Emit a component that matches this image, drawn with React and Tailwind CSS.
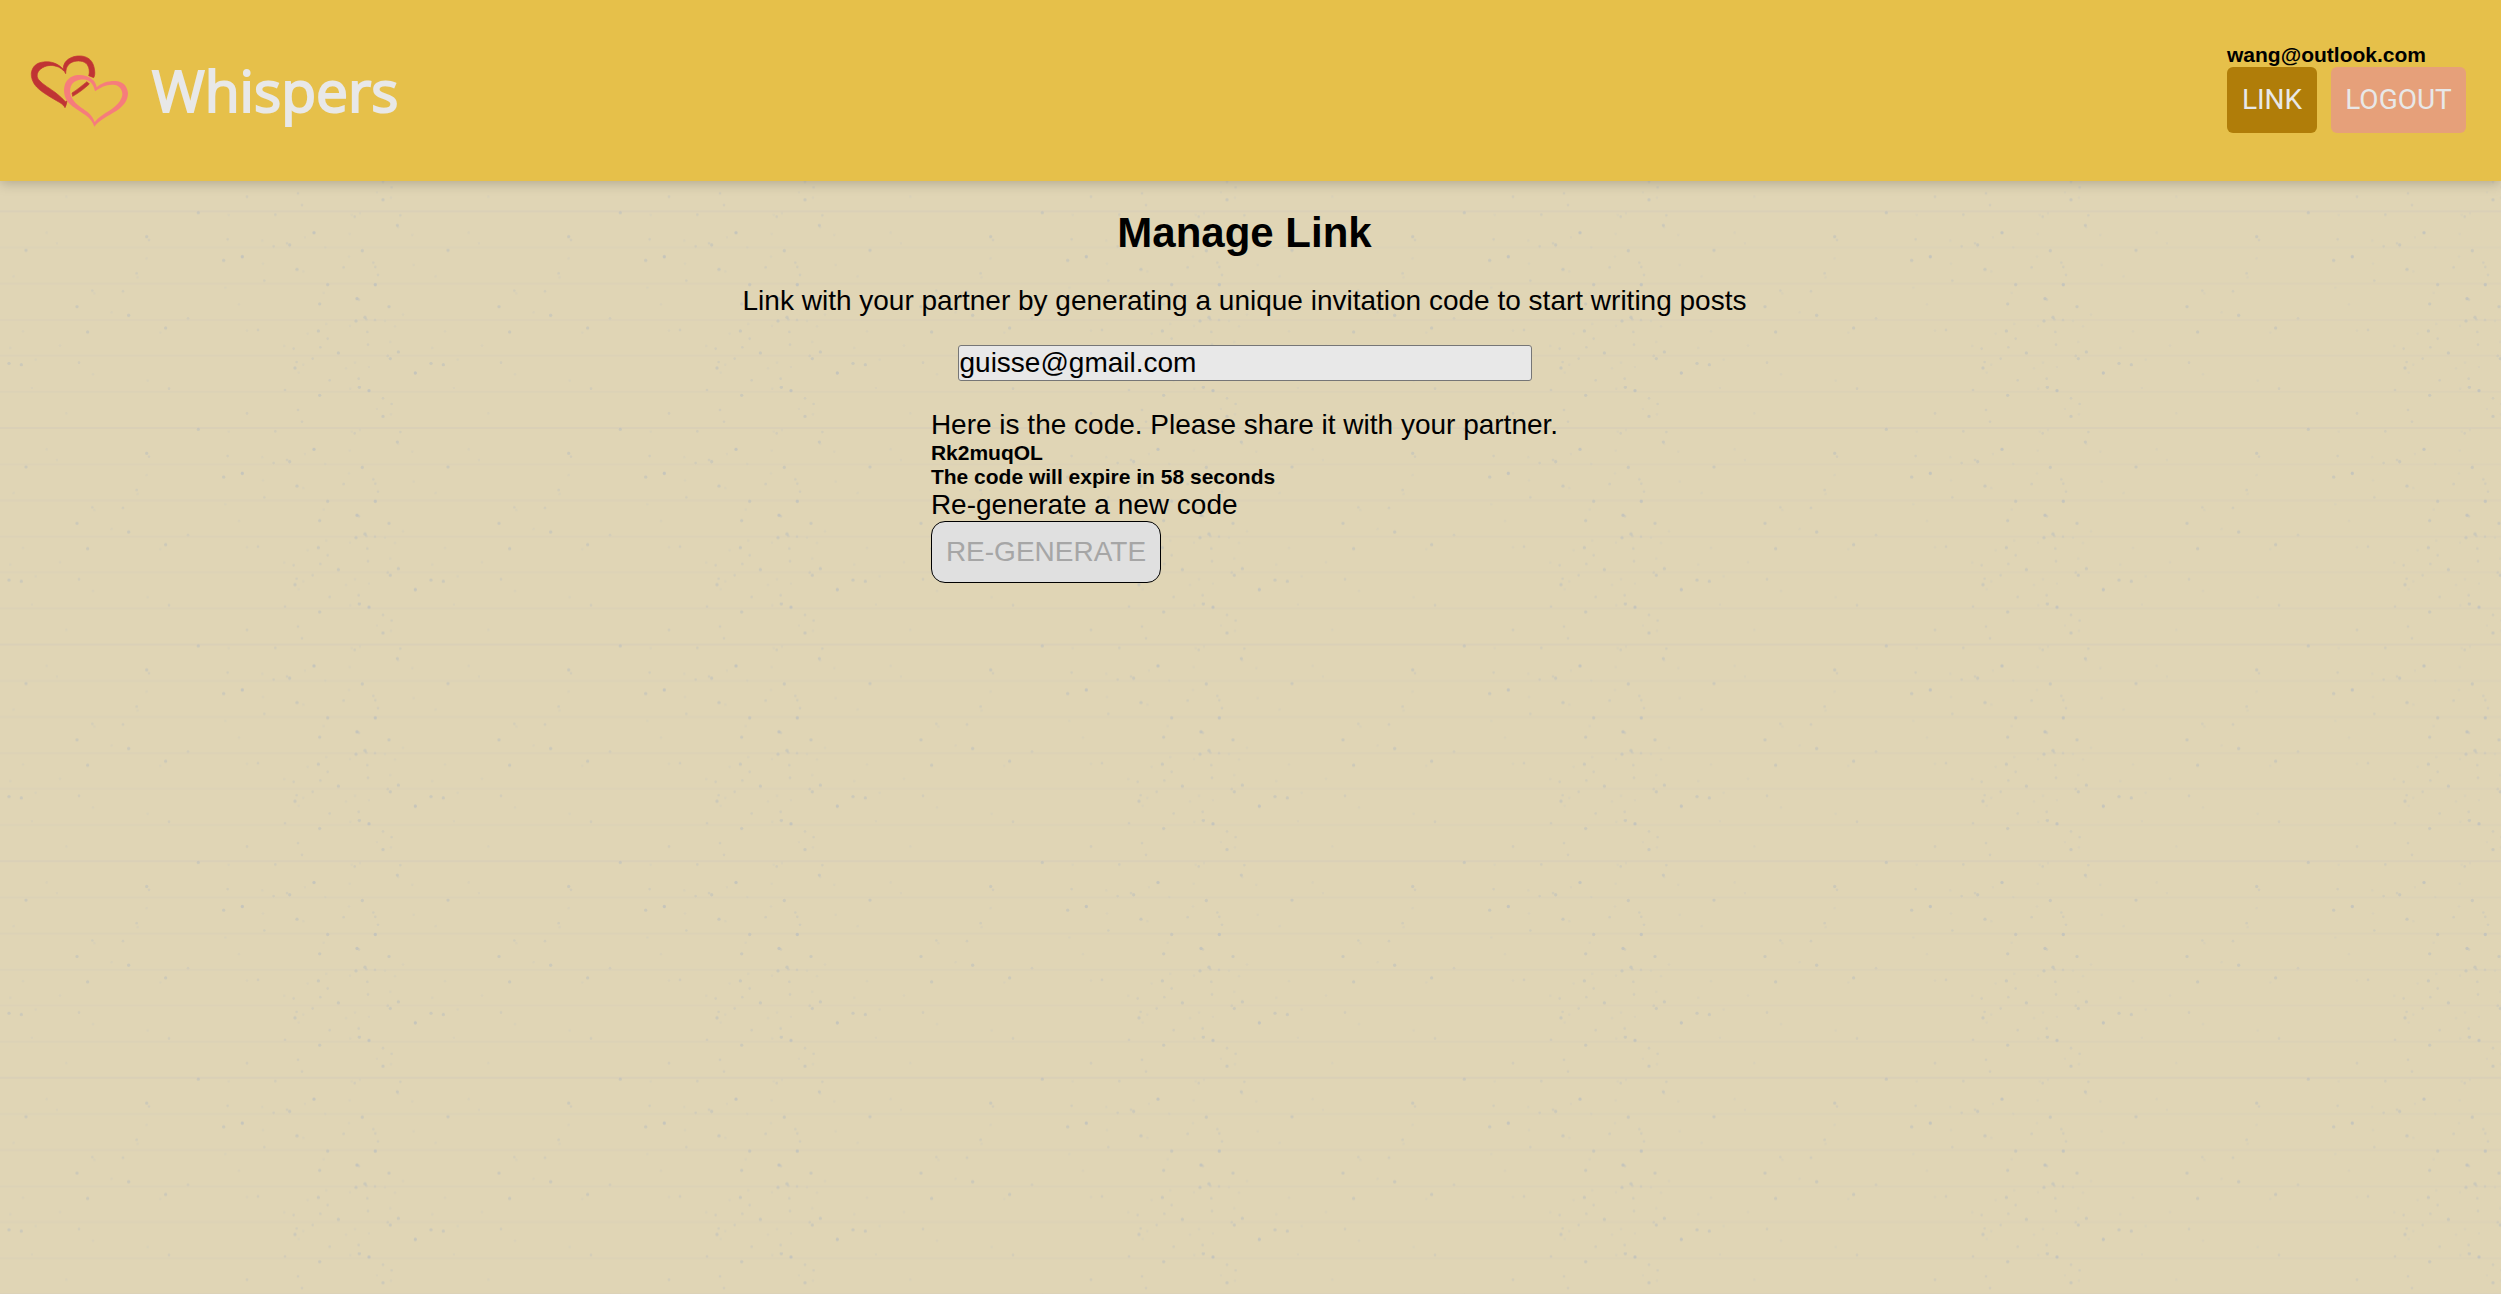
import { useState } from 'react';

// Flecks of one paper tile: x, y, strength
const FLECKS = [
  [592, 130, 3], [437, 202, 3], [444, 212, 2], [75, 243, 3], [668, 273, 3], [724, 262, 4],
  [939, 190, 4], [888, 300, 3], [866, 227, 3], [858, 222, 2], [818, 231, 2], [680, 210, 2],
  [784, 214, 1], [790, 334, 2], [786, 283, 1], [673, 355, 1], [956, 28, 3], [956, 404, 3],
  [852, 12, 2], [891, 72, 2], [903, 107, 2], [738, 82, 2], [196, 82, 1], [137, 190, 1],
  [168, 222, 1], [407, 312, 2], [410, 324, 1], [437, 267, 1], [274, 364, 2], [280, 372, 1],
  [366, 366, 2], [228, 412, 3], [383, 438, 3], [332, 429, 1], [260, 488, 3], [494, 476, 3],
  [478, 490, 1], [561, 447, 2], [714, 405, 1], [771, 482, 2], [738, 484, 1], [952, 485, 3],
  [980, 508, 2], [958, 534, 2], [1012, 551, 3], [878, 538, 2], [850, 530, 1], [935, 568, 2],
  [887, 578, 2], [882, 596, 3], [907, 586, 1], [893, 610, 1], [986, 633, 2], [1035, 597, 1],
  [1062, 580, 1], [1104, 593, 1], [1192, 548, 3], [1168, 568, 3], [1160, 560, 2], [1243, 611, 4],
  [1073, 628, 2], [24, 582, 3], [61, 586, 3], [234, 580, 2], [276, 615, 1], [66, 486, 1],
  [28, 536, 1], [177, 529, 1], [104, 571, 1], [440, 634, 1], [504, 8, 2], [93, 6, 1],
  [1075, 4, 3], [1104, 14, 4], [1048, 8, 1], [1146, 37, 2], [1172, 54, 2], [1128, 69, 1],
  [1146, 91, 3], [1170, 85, 1], [1198, 138, 2], [1061, 142, 2], [1052, 137, 1], [1077, 132, 1],
  [1189, 168, 3], [1192, 174, 1], [1046, 194, 1], [1234, 197, 1], [1084, 244, 3], [973, 234, 1],
  [1044, 262, 1], [1117, 280, 2], [1123, 293, 2], [1028, 294, 2], [1131, 317, 2], [1238, 287, 1],
  [980, 346, 3], [1123, 346, 4], [968, 371, 1], [1068, 388, 4], [1074, 391, 2], [1164, 412, 3],
  [1092, 444, 3], [1096, 450, 2], [1065, 455, 3], [1047, 470, 1], [1122, 452, 2], [1152, 455, 1],
  [1206, 436, 1], [1099, 488, 2], [1101, 526, 2], [1168, 518, 1], [823, 136, 2], [683, 137, 1],
  [907, 306, 1], [38, 321, 1], [912, 204, 1], [920, 493, 1], [976, 464, 1], [1182, 471, 1],
];

function PaperTexture() {
  return (
    <svg className="absolute inset-0 -z-10 h-full w-full" aria-hidden="true">
      <defs>
        <pattern id="paper" x="1" y="386" width="422" height="216.6" patternUnits="userSpaceOnUse" viewBox="0 0 1266 650" preserveAspectRatio="none">
          {[17, 126, 235, 343, 452, 559].map((y) => (
            <rect key={y} x="0" y={y - 3} width="1266" height="6" fill="#c6c0bc" opacity={y === 126 ? 0.25 : 0.17} />
          ))}
          {FLECKS.map(([x, y, s]) => (
            <circle key={`${x}-${y}`} cx={x} cy={y} r={s > 2 ? 5 : 4} fill="#b4bac0" opacity={s * 0.15} />
          ))}
        </pattern>
      </defs>
      <rect width="100%" height="100%" fill="url(#paper)" />
    </svg>
  );
}

function HeartsLogo() {
  return (
    <svg className="h-[90px] w-[120px] shrink-0" viewBox="0 -6 360 270" aria-hidden="true">
      <g fill="#c03434" stroke="#c03434" strokeWidth="2" strokeLinejoin="round">
        <path d="M137 86L133 79C127 73 121 69 115 66C98 59 82 60 68 68C52 77 47 92 56 104C68 119 92 131 108 144C119 153 129 162 136 170L141 168C140 176 138 182 135 188C132 182 126 177 118 172C98 160 66 143 50 126C38 113 33 98 34 84C37 64 50 53 70 51C92 48 114 55 129 72L130 76C127 54 144 36 172 33C206 30 222 50 224 78C225 86 224 94 221 98L206 92C210 82 208 64 198 55C186 45 164 46 152 54C141 61 138 70 137 86Z" />
        <path d="M156 144C172 134 188 120 201 110L208 117C194 130 176 144 158 154Z" />
      </g>
      <path
        fill="#f67c7c"
        fillRule="evenodd"
        d="M230 127C244 114 262 108 284 108C306 107 322 122 324 144C324 166 310 184 290 197C266 212 236 226 223 245C218 230 210 220 196 210C178 198 152 184 140 166C130 148 129 124 140 108C152 90 178 86 198 93C216 99 228 110 230 127ZM225 139C222 122 214 110 200 105C184 101 164 106 156 118C146 134 150 154 162 168C174 184 192 192 206 204C214 211 220 220 224 232C234 218 254 206 270 196C288 184 304 168 307 150C308 136 300 124 286 120C266 116 244 124 225 139Z"
      />
    </svg>
  );
}

export default function App() {
  const [email, setEmail] = useState('guisse@gmail.com');

  return (
    <div className="relative isolate min-h-screen bg-[#e0d5b5] font-['Liberation_Sans',Arial,sans-serif] text-[28px] leading-8 text-black">
      <PaperTexture />
      <header className="flex items-start justify-between bg-[#e6c04a] pt-[43px] pr-[35px] pb-12 pl-5 shadow-[0_2px_12px_rgba(0,0,0,0.22)]">
        <a href="#" className="flex items-center gap-3">
          <HeartsLogo />
          <span className="pt-1 font-['Comic_Sans_MS','Open_Sans',sans-serif] text-[57px] leading-[86px] font-medium text-[#e8e8e8] [-webkit-text-stroke:2px_#e8e8e8]">
            Whispers
          </span>
        </a>
        <div>
          <p className="text-[21px] leading-6 font-bold">wang@outlook.com</p>
          <nav className="flex gap-[14px] font-[Roboto,sans-serif] text-[#e8e8e8]">
            <button type="button" className="h-[66px] w-[90px] rounded-md bg-[#b07d09]">LINK</button>
            <button type="button" className="h-[66px] w-[135px] rounded-md bg-[#e6a07a]">LOGOUT</button>
          </nav>
        </div>
      </header>
      <main className="flex flex-col items-center gap-7 pt-7 pr-3">
        <h1 className="text-[42px] leading-[48px] font-bold">Manage Link</h1>
        <p>Link with your partner by generating a unique invitation code to start writing posts</p>
        <input
          type="email"
          aria-label="Partner email"
          value={email}
          onChange={(e) => setEmail(e.target.value)}
          className="h-9 w-[574px] rounded-[3px] border border-[#767676] bg-[#e8e8e8] px-px"
        />
        <section>
          <p>Here is the code. Please share it with your partner.</p>
          <p className="text-[21px] leading-6 font-bold">Rk2muqOL</p>
          <p className="text-[21px] leading-6 font-bold">The code will expire in 58 seconds</p>
          <p>Re-generate a new code</p>
          <button type="button" disabled className="h-[62px] rounded-[14px] border border-black bg-[#e0e0e0] px-[14px] text-[#a6a6a6]">
            RE-GENERATE
          </button>
        </section>
      </main>
    </div>
  );
}
